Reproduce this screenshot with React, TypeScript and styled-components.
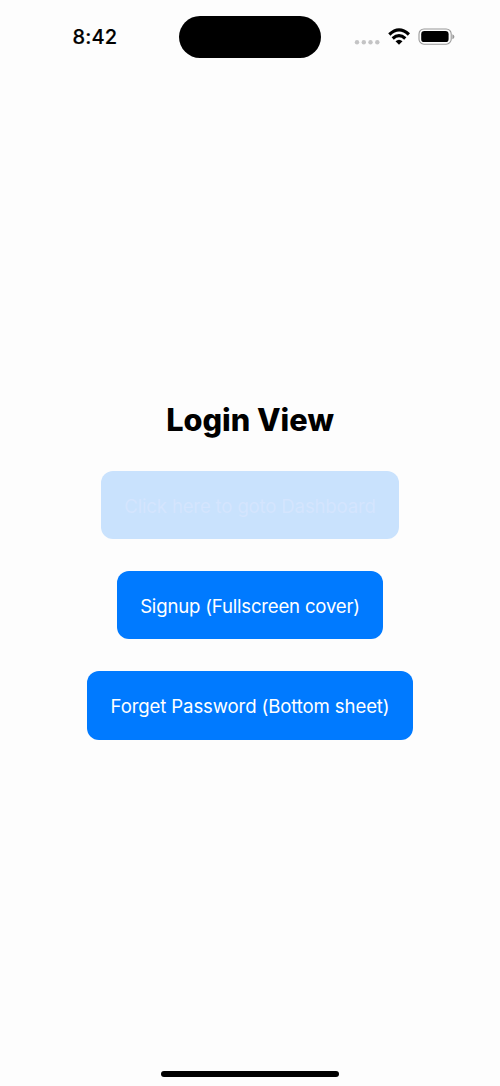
import React from 'react';
import styled, { createGlobalStyle } from 'styled-components';

const GlobalStyle = createGlobalStyle`
  * { box-sizing: border-box; }
  body { margin: 0; background: #fdfdfd; font-family: Inter, "Liberation Sans", sans-serif; }
`;

const Screen = styled.div`
  width: 500px;
  height: 1086px;
  display: flex;
  flex-direction: column;
  align-items: center;
  background: #fdfdfd;
  overflow: hidden;
`;

const StatusBar = styled.header`
  width: 100%;
  height: 58px;
  flex: none;
  display: grid;
  grid-template-columns: 178.6px 142.8px 178.6px;
  padding-top: 15.6px;
`;

const Clock = styled.time`
  padding-left: 72.5px;
  font-size: 20px;
  font-weight: 500;
  letter-spacing: 0.15px;
  line-height: 43px;
  color: #000;
  -webkit-text-stroke: 0.2px #000;
`;

const Island = styled.div`
  height: 42px;
  border-radius: 21px;
  background: #000;
`;

const Indicators = styled.div`
  display: flex;
  height: 42px;
  padding-left: 32.6px;
`;

const Content = styled.main`
  flex: 1;
  padding-top: 342px;
  display: flex;
  flex-direction: column;
  align-items: center;
`;

const Title = styled.h1`
  margin: 0 0 31px;
  font-size: 30.7px;
  line-height: 40px;
  font-weight: 800;
  color: #000;
  white-space: nowrap;
`;

const Actions = styled.div`
  display: flex;
  flex-direction: column;
  align-items: center;
  gap: 32px;
`;

const ActionButton = styled.button<{ $width: number; $pressed?: boolean; $spacing: number }>`
  width: ${({ $width }) => $width}px;
  height: 68.2px;
  padding: 1px 0 0;
  border: 0;
  border-radius: 12px;
  font-family: inherit;
  font-size: 18.6px;
  font-weight: 400;
  letter-spacing: ${({ $spacing }) => $spacing}px;
  white-space: nowrap;
  color: ${({ $pressed }) => ($pressed ? '#d4e5fe' : '#fff')};
  background: ${({ $pressed }) => ($pressed ? '#c9e2fd' : '#007aff')};
`;

const HomeIndicator = styled.div`
  width: 178px;
  height: 6px;
  margin-bottom: 9px;
  border-radius: 3px;
  background: #000;
`;

export default function App() {
  return (
    <Screen>
      <GlobalStyle />
      <StatusBar>
        <Clock>8:42</Clock>
        <Island />
        <Indicators>
          <svg width="104" height="42" viewBox="354 16 104 42">
            <g fill="#c4c4c5">
              <circle cx="357" cy="42.2" r="2.2" />
              <circle cx="363.8" cy="42.2" r="2.2" />
              <circle cx="370.5" cy="42.2" r="2.2" />
              <circle cx="377.3" cy="42.2" r="2.2" />
            </g>
            <g fill="none" stroke="#000" strokeWidth="3.2">
              <path d="M389.3 34.5Q399 25.3 408.9 34.5" />
              <path d="M392.7 38.5Q399 32.7 405.3 38.5" />
            </g>
            <path d="M395.5 41.3Q399 38.2 402.5 41.3L399 44.8Z" />
            <rect x="419" y="29" width="32.2" height="15.2" rx="5" fill="none" stroke="#989898" strokeWidth="1.1" />
            <rect x="421.2" y="31.1" width="27.4" height="11" rx="3.2" />
            <path d="M452.4 34.2Q454.4 35 454.4 36.7T452.4 39.2Z" fill="#989898" />
          </svg>
        </Indicators>
      </StatusBar>
      <Content>
        <Title>Login View</Title>
        <Actions>
          <ActionButton $width={298} $spacing={-0.17} $pressed>Click here to goto Dashboard</ActionButton>
          <ActionButton $width={266} $spacing={-0.2}>Signup (Fullscreen cover)</ActionButton>
          <ActionButton $width={325.5} $spacing={-0.12}>Forget Password (Bottom sheet)</ActionButton>
        </Actions>
      </Content>
      <HomeIndicator />
    </Screen>
  );
}
